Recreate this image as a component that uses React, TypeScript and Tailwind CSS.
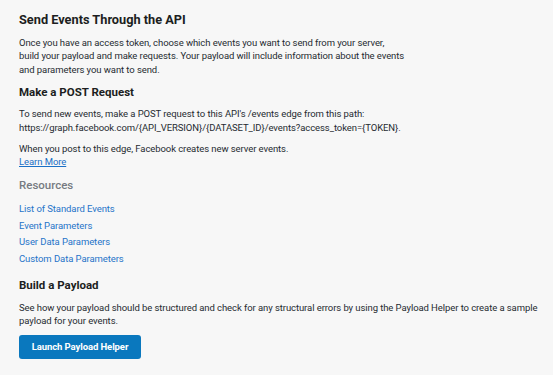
export default function App() {
  const links = [
    "List of Standard Events",
    "Event Parameters",
    "User Data Parameters",
    "Custom Data Parameters",
  ];
  return (
    <div
      className="w-[553px] h-[375px] bg-[#f7f7f7] px-[19px] pt-[11px] text-[#262b31] overflow-hidden whitespace-nowrap tracking-[-0.08px]"
      style={{ fontFamily: 'Roboto, "Noto Sans", sans-serif' }}
    >
      <h1 className="text-[12.75px] leading-[18px] font-bold text-[#1c1e21] tracking-normal">
        Send Events Through the API
      </h1>
      <p className="mt-[6.5px] text-[9.5px] leading-[13.5px]">
        Once you have an access token, choose which events you want to send from your server,
        <br />
        build your payload and make requests. Your payload will include information about the events
        <br />
        and parameters you want to send.
      </p>
      <h2 className="mt-[8px] text-[11.5px] leading-[16px] font-bold text-[#1c1e21] tracking-normal">
        Make a POST Request
      </h2>
      <p className="mt-[7px] text-[9.5px] leading-[13.5px]">
        To send new events, make a POST request to this API's /events edge from this path:
        <br />
        https://graph.facebook.com/{"{API_VERSION}"}/{"{DATASET_ID}"}/events?access_token={"{TOKEN}"}.
      </p>
      <p className="mt-[8.3px] text-[9.5px] leading-[13.5px]">
        When you post to this edge, Facebook creates new server events.
      </p>
      <a className="block text-[9.5px] leading-[11.5px] text-[#1b70c6] underline w-fit">
        Learn More
      </a>
      <h3 className="mt-[10px] text-[11.5px] leading-[16px] font-medium text-[#767b82] tracking-normal">
        Resources
      </h3>
      <div className="mt-[8px] flex flex-col">
        {links.map((l) => (
          <a
            key={l}
            className="block text-[9.5px] leading-[16.5px] text-[#1f74c9] w-fit"
          >
            {l}
          </a>
        ))}
      </div>
      <h2 className="mt-[10px] text-[11.5px] leading-[16px] font-bold text-[#1c1e21] tracking-normal">
        Build a Payload
      </h2>
      <p className="mt-[7.5px] text-[9.5px] leading-[13.3px]">
        See how your payload should be structured and check for any structural errors by using the Payload Helper to create a sample
        <br />
        payload for your events.
      </p>
      <button className="mt-[8px] w-[122px] h-[24px] rounded-[3px] bg-[#0a78be] text-white text-[9.5px] font-bold">
        Launch Payload Helper
      </button>
    </div>
  );
}
